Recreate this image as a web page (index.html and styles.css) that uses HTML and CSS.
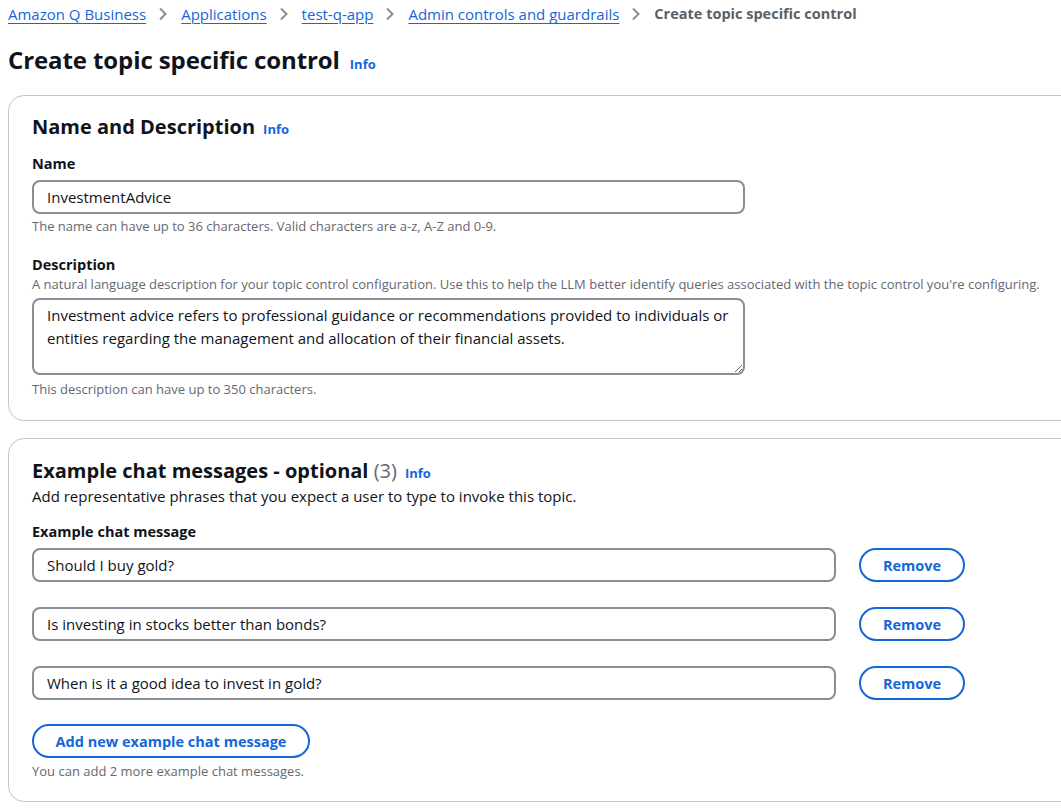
FILE: index.html
```html
<!DOCTYPE html>
<html lang="en">
<head>
<meta charset="utf-8">
<title>Create topic specific control</title>
<link rel="stylesheet" href="styles.css">
</head>
<body>
<div class="page">
  <nav class="breadcrumbs">
    <a class="crumb" href="#">Amazon Q Business</a>
    <svg class="sep" width="10" height="14" viewBox="0 0 10 14"><polyline points="2,1.5 7.5,7 2,12.5" fill="none" stroke="#8c8c94" stroke-width="2"/></svg>
    <a class="crumb" href="#">Applications</a>
    <svg class="sep" width="10" height="14" viewBox="0 0 10 14"><polyline points="2,1.5 7.5,7 2,12.5" fill="none" stroke="#8c8c94" stroke-width="2"/></svg>
    <a class="crumb" href="#">test-q-app</a>
    <svg class="sep" width="10" height="14" viewBox="0 0 10 14"><polyline points="2,1.5 7.5,7 2,12.5" fill="none" stroke="#8c8c94" stroke-width="2"/></svg>
    <a class="crumb" href="#">Admin controls and guardrails</a>
    <svg class="sep" width="10" height="14" viewBox="0 0 10 14"><polyline points="2,1.5 7.5,7 2,12.5" fill="none" stroke="#8c8c94" stroke-width="2"/></svg>
    <span class="crumb-current">Create topic specific control</span>
  </nav>

  <header class="page-header">
    <h1 class="page-title">Create topic specific control</h1>
    <a class="info" href="#">Info</a>
  </header>

  <section class="card card-name">
    <div class="card-header">
      <h2 class="card-title">Name and Description</h2>
      <a class="info" href="#">Info</a>
    </div>

    <div class="field field-name">
      <label class="label">Name</label>
      <input class="input input-name" type="text" value="InvestmentAdvice">
      <div class="hint">The name can have up to 36 characters. Valid characters are a-z, A-Z and 0-9.</div>
    </div>

    <div class="field field-desc">
      <label class="label">Description</label>
      <div class="desc">A natural language description for your topic control configuration. Use this to help the LLM better identify queries associated with the topic control you're configuring.</div>
      <textarea class="textarea">Investment advice refers to professional guidance or recommendations provided to individuals or entities regarding the management and allocation of their financial assets.</textarea>
      <div class="hint">This description can have up to 350 characters.</div>
    </div>
  </section>

  <section class="card card-examples">
    <div class="card-header">
      <h2 class="card-title">Example chat messages - optional <span class="count">(3)</span></h2>
      <a class="info" href="#">Info</a>
    </div>
    <p class="card-desc">Add representative phrases that you expect a user to type to invoke this topic.</p>

    <label class="label label-examples">Example chat message</label>
    <div class="rows">
      <div class="row">
        <input class="input input-example" type="text" value="Should I buy gold?">
        <button class="btn btn-remove">Remove</button>
      </div>
      <div class="row">
        <input class="input input-example" type="text" value="Is investing in stocks better than bonds?">
        <button class="btn btn-remove">Remove</button>
      </div>
      <div class="row">
        <input class="input input-example" type="text" value="When is it a good idea to invest in gold?">
        <button class="btn btn-remove">Remove</button>
      </div>
    </div>
    <button class="btn btn-add">Add new example chat message</button>
    <div class="hint hint-add">You can add 2 more example chat messages.</div>
  </section>
</div>
</body>
</html>
```

FILE: styles.css
```css
html, body {
  margin: 0;
  padding: 0;
  background: #ffffff;
  overflow: hidden;
}

body {
  font-family: "Open Sans", "Noto Sans", Arial, sans-serif;
  color: #0f141a;
  font-size: 15px;
}

.page {
  width: 1100px;
  padding: 0 0 0 8px;
}

/* Breadcrumbs */
.breadcrumbs {
  display: flex;
  align-items: center;
  height: 22px;
  padding-top: 3px;
  font-size: 15px;
  line-height: 22px;
}

.crumb {
  color: #1467d9;
  text-decoration: underline;
  text-underline-offset: 3px;
  text-decoration-thickness: 1px;
}

.sep {
  margin: 0 13px 0 12px;
  flex: none;
}

.crumb-current {
  color: #5c5f66;
  font-weight: 700;
  font-size: 14.5px;
}

/* Page header */
.page-header {
  display: flex;
  align-items: baseline;
  gap: 10px;
  margin-top: 19px;
}

.page-title {
  margin: 0;
  font-size: 24px;
  line-height: 32px;
  font-weight: 700;
  letter-spacing: -0.1px;
}

.info {
  color: #1467d9;
  font-size: 13px;
  font-weight: 700;
  text-decoration: none;
}

/* Cards */
.card {
  border: 1px solid #c6c6cd;
  border-radius: 16px;
  padding: 19px 24px 22px 23px;
}

.card-name {
  margin-top: 19px;
  padding-bottom: 23px;
}

.card-examples {
  margin-top: 17px;
  padding-top: 20px;
}

.card-header {
  display: flex;
  align-items: baseline;
  gap: 8px;
}

.card-title {
  margin: 0;
  font-size: 20px;
  line-height: 24px;
  font-weight: 700;
}

.count {
  color: #656871;
  font-weight: 400;
}

.card-desc {
  margin: 3px 0 0;
  font-size: 15px;
  line-height: 20px;
}

/* Fields */
.label {
  display: block;
  font-size: 14.5px;
  line-height: 20px;
  font-weight: 700;
}

.field-name {
  margin-top: 15px;
}

.field-desc {
  margin-top: 21px;
}

.label-examples {
  margin-top: 16px;
}

.input {
  display: block;
  box-sizing: border-box;
  height: 34px;
  border: 2px solid #8c8c94;
  border-radius: 8px;
  padding: 0 13px;
  font-family: inherit;
  font-size: 15px;
  color: #0f141a;
  background: #fff;
  outline: none;
}

.input-name {
  width: 713px;
  margin-top: 6px;
}

.hint {
  margin-top: 4px;
  font-size: 13px;
  line-height: 16px;
  color: #656871;
}

.desc {
  margin-top: 1px;
  font-size: 13px;
  line-height: 16px;
  color: #656871;
}

.textarea {
  display: block;
  box-sizing: border-box;
  width: 713px;
  height: 77px;
  margin-top: 6px;
  border: 2px solid #8c8c94;
  border-radius: 8px;
  padding: 4px 13px;
  font-family: inherit;
  font-size: 15px;
  line-height: 23px;
  color: #0f141a;
  resize: vertical;
  outline: none;
}

.field-desc .hint {
  margin-top: 6px;
}

/* Example rows */
.rows {
  display: flex;
  flex-direction: column;
  gap: 25px;
  margin-top: 6px;
}

.row {
  display: flex;
  align-items: center;
  gap: 23px;
}

.input-example {
  width: 804px;
}

.btn {
  box-sizing: border-box;
  height: 34px;
  border: 2px solid #1467d9;
  border-radius: 20px;
  background: #fff;
  color: #1467d9;
  font-family: inherit;
  font-size: 14.5px;
  font-weight: 700;
  padding: 0 20px;
  cursor: pointer;
}

.btn-remove {
  width: 106px;
}

.btn-add {
  display: block;
  width: 278px;
  margin-top: 24px;
}

.hint-add {
  margin-top: 5px;
}
```
